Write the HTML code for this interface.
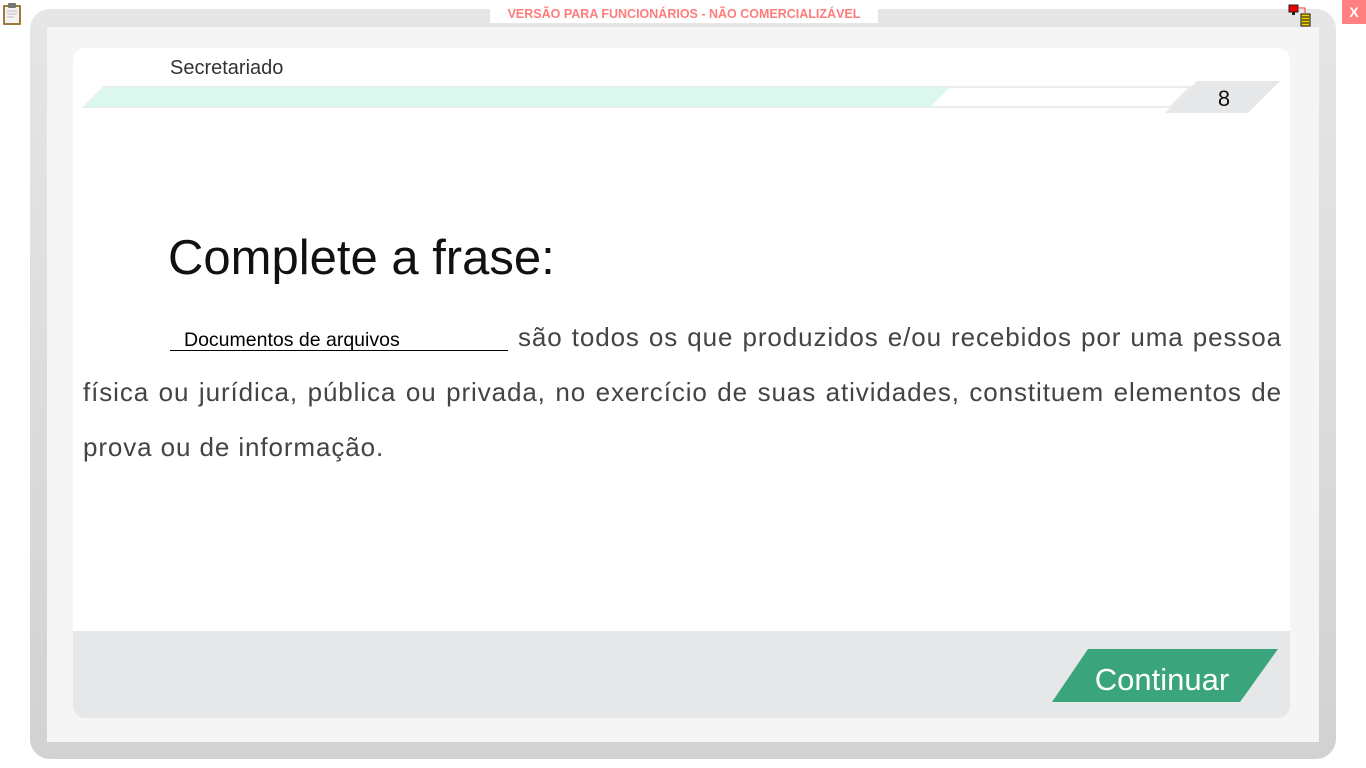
<!DOCTYPE html>
<html><head><meta charset="utf-8"><style>
*{margin:0;padding:0;box-sizing:border-box}
body{width:1366px;height:768px;background:#fff;position:relative;overflow:hidden;font-family:"Liberation Sans",sans-serif}
.frame{position:absolute;left:30px;top:9px;width:1306px;height:750px;border-radius:20px;background:linear-gradient(#e6e6e6,#d2d2d2)}
.inner{position:absolute;left:47px;top:27px;width:1272px;height:715px;background:#f5f5f5}
.card{position:absolute;left:73px;top:48px;width:1217px;height:670px;background:#fff;border-radius:12px;overflow:hidden}
.foot{position:absolute;left:0;top:583px;width:100%;height:87px;background:#e6e7e8}
.wm{position:absolute;left:490px;top:6px;width:388px;height:17px;background:#fff;color:#ff7c7c;font-weight:bold;font-size:12.5px;text-align:center;line-height:17px}
.x{position:absolute;left:1342px;top:0;width:24px;height:24px;background:#ff8080;color:#fff;font-weight:bold;font-size:14px;text-align:center;line-height:24px}
.sec{position:absolute;left:170px;top:57px;font-size:20px;color:#333}
.title{position:absolute;left:168px;top:230px;font-size:49px;color:#111}
.para{position:absolute;left:83px;top:310px;width:1199px;font-size:26px;line-height:55px;color:#444;text-align:justify;letter-spacing:0.9px}
.field{display:inline-block;width:338px;margin-left:87px;border-bottom:1px solid #000;font-size:19.5px;color:#000;line-height:20px;padding-left:14px;margin-right:10px;vertical-align:baseline;letter-spacing:0}
</style></head><body>
<svg style="position:absolute;left:2px;top:2px" width="20" height="24" viewBox="0 0 20 24"><rect x="1" y="3" width="18" height="20" rx="1" fill="#a0783a"/><rect x="3" y="5" width="14" height="16" fill="#f4f4f4"/><rect x="6" y="1" width="8" height="5" rx="1" fill="#777"/><path d="M5 9h10M5 12h10M5 15h7" stroke="#bbb"/></svg>
<div class="frame"></div>
<div class="inner"></div>
<div class="card"><div class="foot"></div></div>
<div class="wm">VERSÃO PARA FUNCIONÁRIOS - NÃO COMERCIALIZÁVEL</div>
<svg style="position:absolute;left:1287px;top:3px" width="28" height="24"><rect x="2" y="2" width="9" height="7" fill="#e00" stroke="#222"/><rect x="5" y="9" width="3" height="3" fill="#222"/><path d="M11 5h7v5" stroke="#e33" fill="none"/><rect x="14" y="11" width="9" height="12" fill="#f0d000" stroke="#111"/><path d="M15 14h7M15 17h7M15 20h7" stroke="#111"/></svg>
<div class="x">X</div>
<div class="sec">Secretariado</div>
<svg style="position:absolute;left:0;top:0" width="1366" height="768">
<polygon points="104,87 1190,87 1170,107 84,107" fill="#fff" stroke="#ececec" stroke-width="2"/>
<polygon points="104,87 950,87 930,107 84,107" fill="#dcf8ee"/>
<polygon points="1197,81 1280,81 1248,113 1165,113" fill="#e6e7e8"/>
<text x="1224" y="106" font-size="22" font-family="Liberation Sans" text-anchor="middle" fill="#111">8</text>
<polygon points="1088,649 1278,649 1240,702 1052,702" fill="#3aa57c"/>
<text x="1162" y="690" font-size="31" font-family="Liberation Sans" text-anchor="middle" fill="#fff">Continuar</text>
</svg>
<div class="title">Complete a frase:</div>
<div class="para"><span class="field">Documentos de arquivos</span>são todos os que produzidos e/ou recebidos por uma pessoa física ou jurídica, pública ou privada, no exercício de suas atividades, constituem elementos de prova ou de informação.</div>
</body></html>
